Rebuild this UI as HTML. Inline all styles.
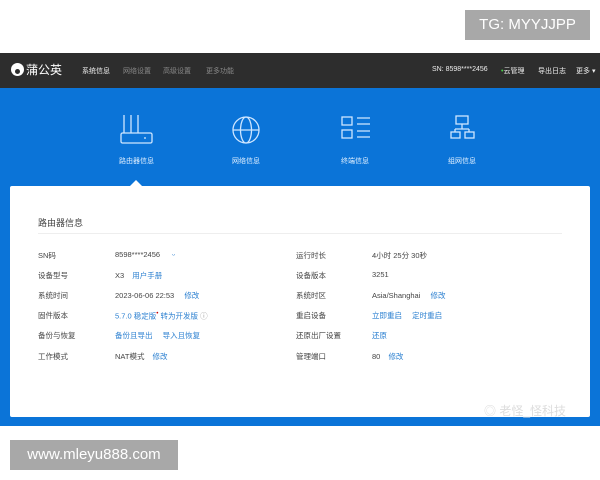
<!DOCTYPE html>
<html><head><meta charset="utf-8"><style>
*{margin:0;padding:0;box-sizing:border-box}
body{width:600px;height:480px;background:#fff;font-family:"Liberation Sans","Noto Sans CJK SC",sans-serif;position:relative;overflow:hidden}
.a{position:absolute;white-space:nowrap}
.tg{left:465px;top:10px;width:125px;height:30px;background:#a8a8a8;color:#fff;font-size:15px;line-height:30px;text-align:center}
.bar{left:0;top:53px;width:600px;height:35px;background:#2d2d2d}
.blue{left:0;top:88px;width:600px;height:338px;background:#0b74d8}
.card{left:10px;top:186px;width:580px;height:231px;background:#fff;border-radius:2px}
.nav{font-size:7px;color:#888;top:66px}
.lab{font-size:7px;color:#dfefff;top:156px}
.r{font-size:7.5px;color:#444}
.l{font-size:7.5px;color:#2a7fd0}
.site{left:10px;top:440px;width:168px;height:30px;background:#a8a8a8;color:#fff;font-size:15px;line-height:30px;text-align:center}
</style></head><body>
<div class="a tg">TG: MYYJJPP</div>
<div class="a bar"></div>
<div class="a" style="left:11px;top:63px;width:13px;height:13px;border-radius:50%;background:#fff"></div>
<div class="a" style="left:15px;top:69px;width:5px;height:5px;border-radius:50%;background:#2d2d2d"></div>
<div class="a" style="left:26px;top:61px;font-size:12px;color:#fff">蒲公英</div>
<div class="a nav" style="left:82px;color:#eee">系统信息</div>
<div class="a nav" style="left:123px">网络设置</div>
<div class="a nav" style="left:163px">高级设置</div>
<div class="a nav" style="left:206px">更多功能</div>
<div class="a nav" style="left:432px;color:#eee">SN: 8598****2456</div>
<div class="a nav" style="left:501px;color:#eee"><span style="color:#4c4">•</span>云管理</div>
<div class="a nav" style="left:538px;color:#eee">导出日志</div>
<div class="a nav" style="left:576px;color:#eee">更多 ▾</div>
<div class="a blue"></div>
<svg class="a" style="left:0;top:88px" width="600" height="100" fill="none" stroke="#cfe6ff" stroke-width="1.3">
<path d="M124 27v18M131 27v18M138 27v18"/><rect x="121" y="45" width="31" height="10" rx="1.5"/><path d="M144 50h2"/>
<circle cx="246" cy="42" r="13"/><ellipse cx="246" cy="42" rx="5.5" ry="13"/><path d="M233 42h26"/>
<rect x="342" y="29" width="10" height="8"/><rect x="342" y="42" width="10" height="8"/><path d="M357 30h13M357 36h13M357 43h13M357 49h13"/>
<rect x="456" y="28" width="12" height="8"/><path d="M462 36v5M455 41h14M455 41v3M469 41v3"/><rect x="451" y="44" width="9" height="6"/><rect x="465" y="44" width="9" height="6"/>
</svg>
<div class="a lab" style="left:119px">路由器信息</div>
<div class="a lab" style="left:232px">网络信息</div>
<div class="a lab" style="left:341px">终端信息</div>
<div class="a lab" style="left:448px">组网信息</div>
<div class="a" style="left:130px;top:180px;width:0;height:0;border-left:6px solid transparent;border-right:6px solid transparent;border-bottom:6px solid #fff"></div>
<div class="a card"></div>
<div class="a" style="left:38px;top:216px;font-size:9px;color:#444">路由器信息</div>
<div class="a" style="left:38px;top:233px;width:524px;height:1px;background:#eee"></div>
<div class="a r" style="left:38px;top:250px">SN码</div><div class="a r" style="left:115px;top:250px">8598****2456 <span style="color:#2a7fd0;margin-left:10px">ᵕ</span></div>
<div class="a r" style="left:296px;top:250px">运行时长</div><div class="a r" style="left:372px;top:250px">4小时 25分 30秒</div>
<div class="a r" style="left:38px;top:270px">设备型号</div><div class="a r" style="left:115px;top:270px">X3 <span class="l" style="margin-left:6px">用户手册</span></div>
<div class="a r" style="left:296px;top:270px">设备版本</div><div class="a r" style="left:372px;top:270px">3251</div>
<div class="a r" style="left:38px;top:290px">系统时间</div><div class="a r" style="left:115px;top:290px">2023-06-06 22:53 <span class="l" style="margin-left:8px">修改</span></div>
<div class="a r" style="left:296px;top:290px">系统时区</div><div class="a r" style="left:372px;top:290px">Asia/Shanghai <span class="l" style="margin-left:8px">修改</span></div>
<div class="a r" style="left:38px;top:310px">固件版本</div><div class="a l" style="left:115px;top:310px">5.7.0 稳定版<sup style="color:#c00">•</sup> 转为开发版 <span style="color:#999">ⓘ</span></div>
<div class="a r" style="left:296px;top:310px">重启设备</div><div class="a l" style="left:372px;top:310px">立即重启 <span style="margin-left:8px">定时重启</span></div>
<div class="a r" style="left:38px;top:330px">备份与恢复</div><div class="a l" style="left:115px;top:330px">备份且导出 <span style="margin-left:8px">导入且恢复</span></div>
<div class="a r" style="left:296px;top:330px">还原出厂设置</div><div class="a l" style="left:372px;top:330px">还原</div>
<div class="a r" style="left:38px;top:351px">工作模式</div><div class="a r" style="left:115px;top:351px">NAT模式 <span class="l" style="margin-left:6px">修改</span></div>
<div class="a r" style="left:296px;top:351px">管理端口</div><div class="a r" style="left:372px;top:351px">80 <span class="l" style="margin-left:6px">修改</span></div>
<div class="a" style="left:484px;top:402px;font-size:12px;color:#ddd">◎ 老怪_怪科技</div>
<div class="a site">www.mleyu888.com</div>
</body></html>
